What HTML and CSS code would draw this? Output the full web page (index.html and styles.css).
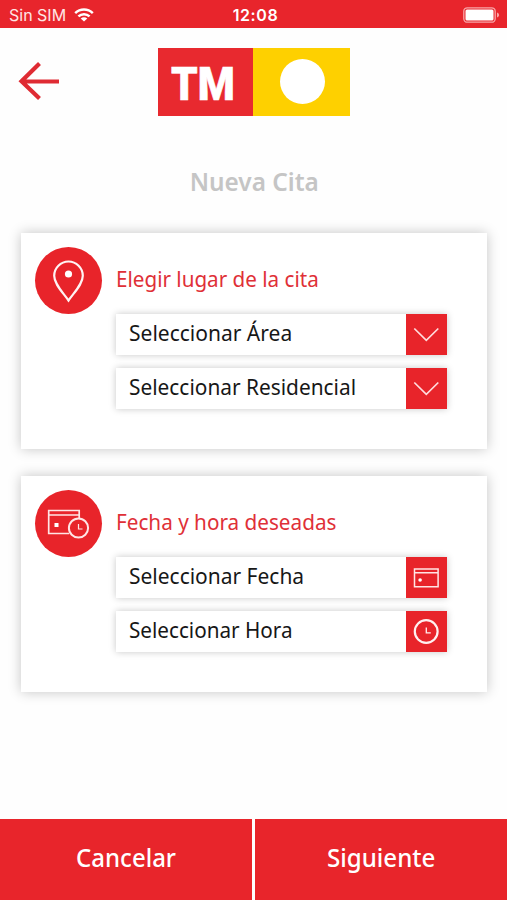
FILE: index.html
```html
<!DOCTYPE html>
<html lang="es">
<head>
<meta charset="utf-8">
<title>Nueva Cita</title>
<link rel="stylesheet" href="styles.css">
</head>
<body>
<div class="status">
  <div class="carrier"><span>Sin SIM</span>
    <svg width="20" height="14" viewBox="0 0 20 14" fill="none" stroke="#fff" stroke-width="2.5"><path d="M1.2 5.2C6.2.4 13.8.4 18.8 5.2M4.4 8.4c3.2-3 8-3 11.2 0"/><path d="M10 13.4 6.7 10.4c1.900-1.700 4.700-1.700 6.600 0z" fill="#fff" stroke="none"/></svg>
  </div>
  <time class="clock">12:08</time>
  <svg class="battery" width="37" height="16" viewBox="0 0 37 16"><rect x=".8" y=".8" width="31.400" height="14.400" rx="3.500" fill="none" stroke="#f8a5a7" stroke-width="1.300"/><rect x="2.500" y="2.500" width="28" height="11" rx="1.500" fill="#fff"/><path d="M34 5.500c2.800 1 2.800 4 0 5z" fill="#f8a5a7"/></svg>
</div>
<header class="header">
  <svg class="back" width="42" height="40" viewBox="0 0 42 40" fill="none" stroke="#df2b33" stroke-width="4.200"><path d="M21.500 2.500 3.500 20.200l18 17.300M4 20.500h37"/></svg>
  <div class="logo"><div class="logo-red"><span class="logo-text">TM</span></div><div class="logo-yellow"><i class="dot"></i></div></div>
</header>
<h1 class="title"><span class="t-title">Nueva Cita</span></h1>
<main class="cards">
  <section class="card">
    <div class="badge"><svg width="68" height="68" viewBox="0 0 68 68" fill="none" stroke="#fff3f3" stroke-width="2.200"><path d="M33.500 53.500C27.500 45 19.200 37 19.200 28.800a14.300 14.300 0 0 1 28.600 0C47.800 37 39.500 45 33.500 53.500z"/><circle cx="33.500" cy="27" r="3.600" fill="#fff" stroke="none"/></svg></div>
    <div class="body">
      <h2 class="heading"><span class="t-place">Elegir lugar de la cita</span></h2>
      <div class="field"><span class="label t-area">Seleccionar Área</span><div class="action"><svg width="41" height="41" viewBox="0 0 41 41" fill="none" stroke="#ffdcdd" stroke-width="1.700"><path d="m8.300 14.500 12 11.800 12-11.800"/></svg></div></div>
      <div class="field"><span class="label t-res">Seleccionar Residencial</span><div class="action"><svg width="41" height="41" viewBox="0 0 41 41" fill="none" stroke="#ffdcdd" stroke-width="1.700"><path d="m8.300 14.500 12 11.800 12-11.800"/></svg></div></div>
    </div>
  </section>
  <section class="card">
    <div class="badge"><svg width="68" height="68" viewBox="0 0 68 68" fill="none" stroke="#ffe5e5" stroke-width="1.700"><path d="M44.200 29v-8.500H13.700v23h20.500M13.700 25h30.500"/><rect x="19.500" y="33" width="4" height="4" fill="#fff" stroke="none"/><circle cx="43.500" cy="38" r="9.600" stroke-width="2"/><path d="M43.500 34v5h4" stroke-width="1.200"/></svg></div>
    <div class="body">
      <h2 class="heading"><span class="t-when">Fecha y hora deseadas</span></h2>
      <div class="field"><span class="label t-date">Seleccionar Fecha</span><div class="action"><svg width="41" height="41" viewBox="0 0 41 41" fill="none" stroke="#ffe5e5" stroke-width="1.500"><path d="M8.500 12h23.600v17.800H8.500zM8.500 15.800h23.600"/><circle cx="14.100" cy="23" r="1.800" fill="#fff" stroke="none"/></svg></div></div>
      <div class="field"><span class="label t-hour">Seleccionar Hora</span><div class="action"><svg width="41" height="41" viewBox="0 0 41 41" fill="none" stroke="#fff0f0" stroke-width="2.200"><circle cx="20.200" cy="20.500" r="11.400"/><path d="M20.300 16.500v5.300h4.500" stroke-width="1.300"/></svg></div></div>
    </div>
  </section>
</main>
<footer class="footer">
  <button class="button"><span class="t-cancel">Cancelar</span></button>
  <button class="button"><span class="t-next">Siguiente</span></button>
</footer>
</body>
</html>
```
FILE: styles.css
```css
* { box-sizing: border-box; }
body { margin: 0; height: 900px; display: flex; flex-direction: column; background: #fefefe; color: #171717; font-family: "Noto Sans", sans-serif; overflow: hidden; }
span { display: inline-block; white-space: nowrap; }
svg { display: block; }
.status { height: 27.500px; flex: none; display: grid; grid-template-columns: 1fr auto 1fr; align-items: center; padding: 2px 7px 0 9px; background: #e8252c; color: #fff; font: 16px/20px Inter, sans-serif; }
.carrier { display: flex; align-items: center; gap: 8px; color: #ffe5e5; }
.clock { font-weight: 600; letter-spacing: .6px; padding-left: 2px; }
.battery { justify-self: end; }
.header { height: 88px; flex: none; display: grid; grid-template-columns: 158px 192px 1fr; align-items: start; padding-top: 20.500px; }
.back { margin: 13px 0 0 17.500px; }
.logo { display: flex; height: 67.500px; }
.logo-red { width: 95px; padding: 4px 0 0 13px; background: #e8292f; color: #fff; display: flex; align-items: center; font: 900 46px/1 Roboto, sans-serif; }
.logo-text { transform: scaleX(.92); transform-origin: left; -webkit-text-stroke: .6px #fff; }
.logo-yellow { flex: 1; background: #fed000; display: flex; align-items: center; justify-content: center; }
.dot { width: 45px; height: 45px; margin-left: 1px; border-radius: 50%; background: #fff; }
.title { margin: 0; height: 117.500px; flex: none; padding: 47.500px 0 0 1px; text-align: center; font-size: 25px; line-height: 36px; font-weight: 600; color: #c5c5c5; }
.cards { display: flex; flex-direction: column; gap: 27px; padding: 0 20px 0 21px; flex: 1; }
.card { height: 216px; display: flex; gap: 13.500px; padding: 13.500px 13.500px; background: #fff; box-shadow: 0 0 12px rgba(0,0,0,.23); }
.badge { width: 67.500px; height: 67.500px; flex: none; border-radius: 50%; background: #e8242a; }
.body { width: 331px; display: flex; flex-direction: column; gap: 13px; }
.heading { margin: 0; height: 54px; padding-top: 13px; font-size: 22px; line-height: 36px; font-weight: 400; color: #df3037; }
.field { height: 41px; display: flex; justify-content: space-between; background: #fff; box-shadow: 0 0 7px rgba(0,0,0,.22); }
.label { margin-left: 13.500px; font-size: 22px; line-height: 36px; }
.action { width: 41px; background: #e8242a; }
.heading span, .label { transform-origin: left; }
.t-title { transform: scaleX(.975); }
.t-place { transform: scaleX(.938); }
.t-area { transform: scaleX(.955); }
.t-res { transform: scaleX(.948); }
.t-when { transform: scaleX(.941); }
.t-date { transform: scaleX(.953); }
.t-hour { transform: scaleX(.94); }
.t-cancel { transform: scaleX(.96); }
.t-next { transform: scaleX(.965); }
.footer { height: 81px; flex: none; display: grid; grid-template-columns: 1fr 1fr; gap: 3px; background: #fff; }
.button { border: 0; padding: 0 0 5px; background: #e8252b; color: #fff; font: 500 25px/36px "Noto Sans", sans-serif; }
```
